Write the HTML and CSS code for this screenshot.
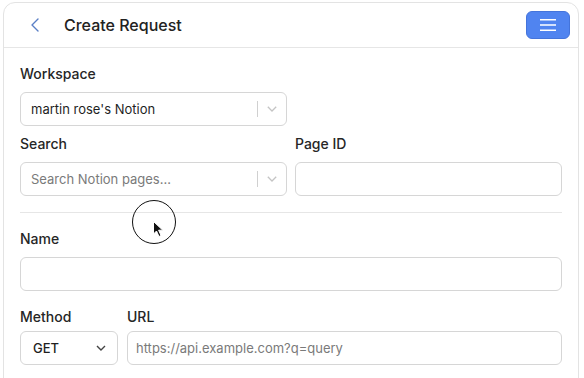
FILE: index.html
```html
<!DOCTYPE html>
<html>
<head>
<meta charset="utf-8">
<link rel="stylesheet" href="styles.css">
</head>
<body>
<div class="card">
  <header class="header">
    <svg class="back" width="10" height="14" viewBox="0 0 10 14"><polyline points="8,1 2,7 8,13" fill="none" stroke="#5a7fc6" stroke-width="1.4" stroke-linecap="round" stroke-linejoin="round"/></svg>
    <h1 class="title">Create Request</h1>
    <button class="menu-btn" aria-label="Menu">
      <svg width="16" height="14" viewBox="0 0 16 14"><path d="M0 1.75H16M0 7H16M0 12.25H16" stroke="#fff" stroke-width="1.5"/></svg>
    </button>
  </header>
  <main class="body">
    <div class="grid2">
      <div class="field">
        <label class="label">Workspace</label>
        <div class="rselect">
          <span class="rs-value">martin rose's Notion</span>
          <span class="rs-sep"></span>
          <span class="rs-ind"><svg width="10" height="6" viewBox="0 0 10 6"><polyline points="0.8,0.8 5,5 9.2,0.8" fill="none" stroke="#c4c4c4" stroke-width="1.3"/></svg></span>
        </div>
      </div>
    </div>
    <div class="grid2 row-gap">
      <div class="field">
        <label class="label">Search</label>
        <div class="rselect">
          <span class="rs-value placeholder">Search Notion pages...</span>
          <span class="rs-sep"></span>
          <span class="rs-ind"><svg width="10" height="6" viewBox="0 0 10 6"><polyline points="0.8,0.8 5,5 9.2,0.8" fill="none" stroke="#c4c4c4" stroke-width="1.3"/></svg></span>
        </div>
      </div>
      <div class="field">
        <label class="label">Page ID</label>
        <div class="input"></div>
      </div>
    </div>
    <hr class="divider">
    <div class="field">
      <label class="label">Name</label>
      <div class="input"></div>
    </div>
    <div class="method-row">
      <div class="field method">
        <label class="label tight">Method</label>
        <div class="nselect"><span>GET</span><svg width="10" height="6" viewBox="0 0 10 6"><polyline points="1,1 5,5 9,1" fill="none" stroke="#444" stroke-width="1.4"/></svg></div>
      </div>
      <div class="field url">
        <label class="label tight">URL</label>
        <div class="input"><span class="placeholder">https://api.example.com?q=query</span></div>
      </div>
    </div>
  </main>
  <div class="cursor">
    <svg width="14" height="18" viewBox="0 0 14 18"><path d="M1.5 1.5 L1.5 14 L4.5 11 L7 16.5 L9 15.5 L6.6 10.2 L10.8 10.2 Z" fill="#111" stroke="#fff" stroke-width="1" stroke-linejoin="round"/></svg>
  </div>
</div>
</body>
</html>
```
FILE: styles.css
```css
* { box-sizing: border-box; }
html, body { margin: 0; padding: 0; background: #fff; }
body {
  font-family: Inter, "Noto Sans", "Liberation Sans", sans-serif;
  color: #1f1f1f;
  overflow: hidden;
}
.card {
  position: relative;
  margin: 2px 5px 0 3px;
  width: 576px;
  border: 1px solid #e3e3e3;
  border-radius: 12px;
  background: #fff;
}
.header {
  height: 45px;
  display: flex;
  align-items: center;
  padding: 0 8px 0 26px;
  border-bottom: 1px solid #e6e6e6;
}
.back { display: block; }
.title {
  margin: 0 0 0 24px;
  font-size: 16px;
  font-weight: 500;
  color: #222;
  flex: 1;
}
.menu-btn {
  width: 44px;
  height: 28px;
  border: 1px solid #4474db;
  border-radius: 6px;
  background: #5084f0;
  display: flex;
  align-items: center;
  justify-content: center;
  padding: 0;
}
.menu-btn svg { display: block; }
.body {
  padding: 16px 16px 40px 16px;
}
.grid2 {
  display: grid;
  grid-template-columns: 1fr 1fr;
  column-gap: 8px;
}
.row-gap { margin-top: 8px; }
.field { display: flex; flex-direction: column; }
.label {
  font-size: 14px;
  line-height: 20px;
  font-weight: 450;
  color: #262626;
  margin-bottom: 8px;
}
.label.tight { margin-bottom: 4px; }
.rselect, .input, .nselect {
  height: 34px;
  border: 1px solid #d6d6d6;
  border-radius: 6px;
  display: flex;
  align-items: center;
  font-size: 13px;
  color: #1f1f1f;
}
.rs-value { flex: 1; padding-left: 10px; }
.placeholder { color: #7a7a7a; }
.rs-sep { width: 1px; height: 16px; background: #d0d0d0; }
.rs-ind {
  width: 28px;
  display: flex;
  justify-content: center;
  align-items: center;
}
.rs-ind svg, .nselect svg { display: block; }
.input { padding-left: 8px; }
.divider {
  border: 0;
  border-top: 1px solid #e6e6e6;
  margin: 16px 0 16px 0;
  height: 0;
}
.method-row {
  display: flex;
  gap: 9px;
  margin-top: 16px;
}
.method { width: 98px; }
.url { flex: 1; }
.nselect {
  padding: 0 11px 0 12px;
  justify-content: space-between;
  font-weight: 500;
}
.cursor {
  position: absolute;
  left: 128px;
  top: 197px;
  width: 44px;
  height: 44px;
  border: 1.6px solid #111;
  border-radius: 50%;
}
.cursor svg {
  position: absolute;
  left: 19px;
  top: 19px;
}
```
